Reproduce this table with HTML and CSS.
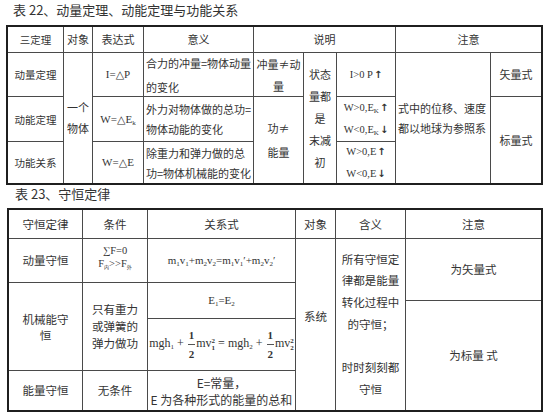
FILE: index.html
```html
<!DOCTYPE html>
<html lang="zh">
<head>
<meta charset="utf-8">
<title>守恒定律</title>
<link rel="stylesheet" href="styles.css">
</head>
<body>
<div class="page">
  <h1 class="title t1">表 22、动量定理、动能定理与功能关系</h1>
  <div class="grid g1">
    <div class="c k"><div>三定理</div></div>
    <div class="c"><div>对象</div></div>
    <div class="c"><div>表达式</div></div>
    <div class="c"><div>意义</div></div>
    <div class="c s3"><div>说明</div></div>
    <div class="c s2"><div>注意</div></div>

    <div class="c k"><div>动量定理</div></div>
    <div class="c r3"><div>一个<br>物体</div></div>
    <div class="c f"><div>I=△P</div></div>
    <div class="c l lh24"><div>合力的冲量=物体动量<br>的变化</div></div>
    <div class="c lh22"><div>冲量≠动<br>量</div></div>
    <div class="c r3 lh22"><div>状态<br>量都<br>是<br>末减<br>初</div></div>
    <div class="c f fs"><div>I&gt;0 P<b class="ar">↑</b></div></div>
    <div class="c r3 l lh20"><div>式中的位移、速度<br>都以地球为参照系</div></div>
    <div class="c"><div>矢量式</div></div>

    <div class="c k"><div>动能定理</div></div>
    <div class="c f"><div>W=△E<sub>k</sub></div></div>
    <div class="c l lh20"><div>外力对物体做的总功=<br>物体动能的变化</div></div>
    <div class="c r2 lh24"><div>功≠<br>能量</div></div>
    <div class="c f fs lh22"><div>W&gt;0,E<sub>K</sub><b class="ar">↑</b><br>W&lt;0,E<sub>K</sub><b class="ar">↓</b></div></div>
    <div class="c r2"><div>标量式</div></div>

    <div class="c k"><div>功能关系</div></div>
    <div class="c f"><div>W=△E</div></div>
    <div class="c l lh20"><div>除重力和弹力做的总<br>功=物体机械能的变化</div></div>
    <div class="c f fs lh22"><div>W&gt;0,E<b class="ar">↑</b><br>W&lt;0,E<b class="ar">↓</b></div></div>
  </div>

  <h2 class="title t2">表 23、守恒定律</h2>
  <div class="grid g2">
    <div class="c"><div>守恒定律</div></div>
    <div class="c"><div>条件</div></div>
    <div class="c"><div>关系式</div></div>
    <div class="c"><div>对象</div></div>
    <div class="c"><div>含义</div></div>
    <div class="c"><div>注意</div></div>

    <div class="c"><div>动量守恒</div></div>
    <div class="c f cond"><div>∑F=0<br>F<sub class="tiny">内</sub>&gt;&gt;F<sub class="tiny">外</sub></div></div>
    <div class="c f eq"><div>m<sub>1</sub>v<sub>1</sub>+m<sub>2</sub>v<sub>2</sub>=m<sub>1</sub>v<sub>1</sub>′+m<sub>2</sub>v<sub>2</sub>′</div></div>
    <div class="c r5 up"><div>系统</div></div>
    <div class="c r5 lh217"><div>所有守恒定<br>律都是能量<br>转化过程中<br>的守恒；<br><br>时时刻刻都<br>守恒</div></div>
    <div class="c r2"><div>为矢量式</div></div>

    <div class="c r3 lh16"><div>机械能守<br>恒</div></div>
    <div class="c r3 lh17"><div>只有重力<br>或弹簧的<br>弹力做功</div></div>
    <div class="c r2 f eq"><div>E<sub>1</sub>=E<sub>2</sub></div></div>
    <div class="c r3"><div>为标量 式</div></div>
    <div class="c f mgh"><div>mgh<sub>1</sub> + <span class="frac"><span class="nu">1</span><span class="de">2</span></span>mv<span class="ss"><span>2</span><span>1</span></span> = mgh<sub>2</sub> + <span class="frac"><span class="nu">1</span><span class="de">2</span></span>mv<span class="ss"><span>2</span><span>2</span></span></div></div>

    <div class="c"><div>能量守恒</div></div>
    <div class="c"><div>无条件</div></div>
    <div class="c lh17 e12"><div>E=常量，<br>E 为各种形式的能量的总和</div></div>
  </div>
</div>
</body>
</html>
```
FILE: styles.css
```css
* {
  box-sizing: border-box;
}

body {
  margin: 0;
  background: #ffffff;
  font-family: "Noto Sans CJK SC", "Noto Sans", sans-serif;
  color: #333333;
}

.page {
  padding-left: 6px;
}

.title {
  margin: 0;
  font-weight: normal;
  font-size: 13px;
  color: #333333;
}

.t1 {
  height: 25px;
  line-height: 20px;
  padding-left: 7px;
}

.t2 {
  height: 23px;
  line-height: 18px;
  padding-left: 9px;
}

.grid {
  display: grid;
  width: max-content;
  gap: 1px;
  background: #4a4a4a;
  border: 2px solid #1f1f1f;
}

.g1 {
  grid-template-columns: 55px 28px 50px 109px 49px 32px 58px 94px 50px;
  grid-template-rows: 25px 43px 44px 41px;
  font-size: 11px;
}

.g2 {
  margin-left: 1px;
  grid-template-columns: 73px 64px 147px 39px 69px 135px;
  grid-template-rows: 28px 43px 17px 17px 51px 39px;
  font-size: 11.5px;
}

.c {
  background: #ffffff;
  display: flex;
  align-items: center;
  justify-content: center;
  text-align: center;
  white-space: nowrap;
  overflow: hidden;
  line-height: 21px;
}

.l {
  justify-content: flex-start;
  text-align: left;
  padding-left: 2px;
}

.k {
  font-size: 10.5px;
}

.r2 { grid-row: span 2; }
.r3 { grid-row: span 3; }
.r5 { grid-row: span 5; }
.s2 { grid-column: span 2; }
.s3 { grid-column: span 3; }

.lh16 { line-height: 16px; }
.lh17 { line-height: 17px; }
.lh20 { line-height: 20px; }
.lh22 { line-height: 22px; }
.lh24 { line-height: 24px; }
.lh217 { line-height: 21.7px; }

.f {
  font-family: "Liberation Serif", "DejaVu Serif", serif;
  font-size: 11px;
}

.fs {
  font-size: 10.5px;
}

.ar {
  font-family: "DejaVu Sans", sans-serif;
  font-weight: bold;
  font-size: 10px;
  margin-left: 1px;
}

sub {
  font-size: 7px;
  line-height: 0;
  vertical-align: -2px;
}

.tiny {
  font-family: "Noto Sans CJK SC", sans-serif;
  font-size: 5px;
}

.cond {
  font-size: 10.5px;
  line-height: 13px;
  padding-bottom: 8px;
}

.eq {
  font-size: 11px;
}

.up {
  padding-bottom: 16px;
}

.e12 {
  font-size: 12px;
}

.mgh {
  font-size: 12px;
  line-height: 14px;
}

.frac {
  display: inline-flex;
  flex-direction: column;
  align-items: center;
  vertical-align: middle;
  font-weight: bold;
  font-size: 11px;
  line-height: 12px;
  margin: 0 1px;
}

.nu {
  padding-bottom: 3px;
  border-bottom: 1px solid #555555;
  padding-left: 1px;
  padding-right: 1px;
}

.de {
  padding-top: 3px;
}

.ss {
  display: inline-flex;
  flex-direction: column;
  vertical-align: middle;
  font-size: 7px;
  line-height: 7px;
  font-weight: bold;
}
```
